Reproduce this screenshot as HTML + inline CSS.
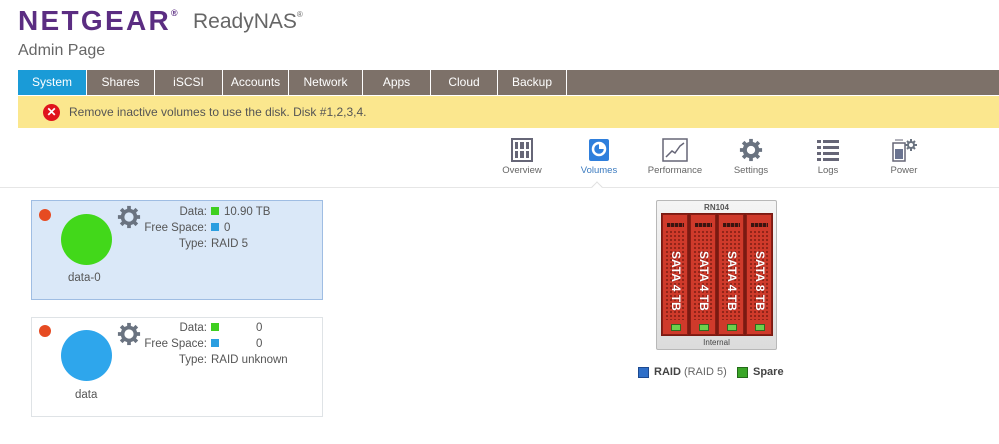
<!DOCTYPE html>
<html><head><style>
*{margin:0;padding:0;box-sizing:border-box}
body{width:999px;height:444px;overflow:hidden;background:#fff;font-family:"Liberation Sans",sans-serif;position:relative;color:#444}
.a{position:absolute}
.tab{position:absolute;top:70px;height:25px;background:#7d7169;color:#fff;font-size:12px;text-align:center;line-height:25px;border-right:1px solid #fff}
.nav{position:absolute;top:138px;width:70px;text-align:center;font-size:9.5px;color:#666}
.nav svg{display:block;margin:0 auto 3px}
.card{position:absolute;left:31px;width:292px;height:100px}
.lbl{position:absolute;font-size:11.5px;color:#555;text-align:right;width:100px}
.val{position:absolute;font-size:11.5px;color:#555}
.sq{display:inline-block;width:8px;height:8px;vertical-align:-0px;margin-right:5px}
.drive{position:absolute;top:214px;width:26px;height:121px;background:#cf3a2b;border:1px solid #8a1e15}
.drive .t{position:absolute;left:4px;top:8px;width:17px;height:4px;background:repeating-linear-gradient(90deg,#3a1410 0 3px,#a02a1e 3px 4px)}
.drive .h{position:absolute;left:2px;right:2px;top:15px;bottom:14px;background:radial-gradient(circle,#8e2318 1px,transparent 1.3px) 0 0/4px 4px}
.drive .s{position:absolute;left:13px;top:36px;transform:rotate(90deg);transform-origin:0 0;color:#fff;font-weight:bold;font-size:12px;white-space:nowrap;margin-left:7px;text-shadow:0 0 1px #600}
.drive .l{position:absolute;left:8px;bottom:3px;width:10px;height:7px;background:#6cd04c;border:1px solid #2e6b1f}
</style></head><body>
<div class="a" style="left:18px;top:5px;font-size:28px;font-weight:900;color:#5b2d82;letter-spacing:2.3px">NETGEAR<sup style="font-size:9px;vertical-align:14px">®</sup></div>
<div class="a" style="left:193px;top:10px;font-size:21px;color:#666">ReadyNAS<sup style="font-size:8px;vertical-align:11px">®</sup></div>
<div class="a" style="left:18px;top:42px;font-size:16px;color:#666">Admin Page</div>
<div class="a" style="left:18px;top:70px;width:981px;height:25px;background:#7d7169"></div>
<div class="tab" style="left:18px;width:69px;background:#1a9bd7">System</div>
<div class="tab" style="left:87px;width:68px">Shares</div>
<div class="tab" style="left:155px;width:68px">iSCSI</div>
<div class="tab" style="left:223px;width:66px">Accounts</div>
<div class="tab" style="left:289px;width:74px">Network</div>
<div class="tab" style="left:363px;width:68px">Apps</div>
<div class="tab" style="left:431px;width:67px">Cloud</div>
<div class="tab" style="left:498px;width:69px">Backup</div>
<div class="a" style="left:18px;top:96px;width:981px;height:32px;background:#fbe78e"></div>
<div class="a" style="left:43px;top:104px;width:17px;height:17px;border-radius:50%;background:#e0141c;color:#fff;font-size:12px;font-weight:bold;text-align:center;line-height:17px">✕</div>
<div class="a" style="left:69px;top:105px;font-size:12px;color:#555">Remove inactive volumes to use the disk. Disk #1,2,3,4.</div>

<div class="nav" style="left:487px"><svg width="22" height="24"><rect x="1" y="1" width="20" height="22" fill="#fff" stroke="#667" stroke-width="2"/><g fill="#667"><rect x="4" y="4" width="3" height="7"/><rect x="9" y="4" width="4" height="7"/><rect x="15" y="4" width="3" height="7"/><rect x="4" y="13" width="3" height="7"/><rect x="9" y="13" width="4" height="7"/><rect x="15" y="13" width="3" height="7"/></g></svg>Overview</div>
<div class="nav" style="left:564px;color:#3a7abf"><svg width="22" height="24"><rect x="1" y="1" width="20" height="22" rx="2" fill="#2f7fdc"/><circle cx="11" cy="11" r="6" fill="none" stroke="#fff" stroke-width="2.5"/><path d="M11 11 L17 11 A6 6 0 0 0 11 5 Z" fill="#fff"/></svg>Volumes</div>
<div class="nav" style="left:640px"><svg width="26" height="24"><rect x="1" y="1" width="24" height="22" fill="#fff" stroke="#667" stroke-width="1.5"/><path d="M4 19 L10 13 L13 15 L18 8 L22 5" fill="none" stroke="#667" stroke-width="1.5"/></svg>Performance</div>
<div class="nav" style="left:716px"><svg width="24" height="24" viewBox="0 0 26 26"><g fill="#6a7380"><circle cx="13" cy="13" r="9"/><g stroke="#6a7380" stroke-width="4"><line x1="13" y1="1" x2="13" y2="25"/><line x1="1" y1="13" x2="25" y2="13"/><line x1="4.5" y1="4.5" x2="21.5" y2="21.5"/><line x1="21.5" y1="4.5" x2="4.5" y2="21.5"/></g></g><circle cx="13" cy="13" r="4.5" fill="#fff"/></svg>Settings</div>
<div class="nav" style="left:793px"><svg width="24" height="24"><g fill="#667"><rect x="1" y="2" width="4" height="3"/><rect x="7" y="2" width="16" height="3"/><rect x="1" y="8" width="4" height="3"/><rect x="7" y="8" width="16" height="3"/><rect x="1" y="14" width="4" height="3"/><rect x="7" y="14" width="16" height="3"/><rect x="1" y="20" width="4" height="3"/><rect x="7" y="20" width="16" height="3"/></g></svg>Logs</div>
<div class="nav" style="left:869px"><svg width="28" height="24"><rect x="3" y="5" width="12" height="18" fill="#fff" stroke="#667" stroke-width="1.5"/><rect x="5" y="11" width="8" height="10" fill="#6a7390"/><line x1="5" y1="2" x2="13" y2="2" stroke="#667"/><g fill="#6a7380"><circle cx="21" cy="7" r="4"/><g stroke="#6a7380" stroke-width="2"><line x1="21" y1="1" x2="21" y2="13"/><line x1="15" y1="7" x2="27" y2="7"/><line x1="17" y1="3" x2="25" y2="11"/><line x1="25" y1="3" x2="17" y2="11"/></g></g><circle cx="21" cy="7" r="2" fill="#fff"/></svg>Power</div>
<div class="a" style="left:0;top:187px;width:999px;height:1px;background:#e6e6e6"></div>
<div class="a" style="left:593px;top:183px;width:8px;height:8px;background:#fff;border-left:1px solid #e0e0e0;border-top:1px solid #e0e0e0;transform:rotate(45deg)"></div>

<div class="card" style="top:200px;background:#dae8f8;border:1px solid #9fbde3"></div>
<div class="a" style="left:39px;top:209px;width:12px;height:12px;border-radius:50%;background:#e64b22"></div>
<div class="a" style="left:61px;top:214px;width:51px;height:51px;border-radius:50%;background:#42d81a"></div>
<div class="a" style="left:68px;top:272px;font-size:11.5px;color:#555">data-0</div>
<svg class="a" style="left:117px;top:205px" width="24" height="24" viewBox="0 0 26 26"><g fill="#6a7380"><circle cx="13" cy="13" r="9"/><g stroke="#6a7380" stroke-width="4"><line x1="13" y1="1" x2="13" y2="25"/><line x1="1" y1="13" x2="25" y2="13"/><line x1="4.5" y1="4.5" x2="21.5" y2="21.5"/><line x1="21.5" y1="4.5" x2="4.5" y2="21.5"/></g></g><circle cx="13" cy="13" r="5" fill="#dae8f8"/></svg>
<div class="lbl" style="left:107px;top:206px">Data:</div>
<div class="lbl" style="left:107px;top:222px">Free Space:</div>
<div class="lbl" style="left:107px;top:238px">Type:</div>
<div class="val" style="left:211px;top:206px"><span class="sq" style="background:#3fcf20"></span>10.90 TB</div>
<div class="val" style="left:211px;top:222px"><span class="sq" style="background:#2b9ee0"></span>0</div>
<div class="val" style="left:211px;top:238px">RAID 5</div>

<div class="card" style="top:317px;background:#fff;border:1px solid #dfe3e6"></div>
<div class="a" style="left:39px;top:325px;width:12px;height:12px;border-radius:50%;background:#e64b22"></div>
<div class="a" style="left:61px;top:330px;width:51px;height:51px;border-radius:50%;background:#2ea6ec"></div>
<div class="a" style="left:75px;top:389px;font-size:11.5px;color:#555">data</div>
<svg class="a" style="left:117px;top:322px" width="24" height="24" viewBox="0 0 26 26"><g fill="#6a7380"><circle cx="13" cy="13" r="9"/><g stroke="#6a7380" stroke-width="4"><line x1="13" y1="1" x2="13" y2="25"/><line x1="1" y1="13" x2="25" y2="13"/><line x1="4.5" y1="4.5" x2="21.5" y2="21.5"/><line x1="21.5" y1="4.5" x2="4.5" y2="21.5"/></g></g><circle cx="13" cy="13" r="5" fill="#fff"/></svg>
<div class="lbl" style="left:107px;top:322px">Data:</div>
<div class="lbl" style="left:107px;top:338px">Free Space:</div>
<div class="lbl" style="left:107px;top:354px">Type:</div>
<div class="val" style="left:211px;top:322px"><span class="sq" style="background:#3fcf20"></span></div>
<div class="val" style="left:256px;top:322px">0</div>
<div class="val" style="left:211px;top:338px"><span class="sq" style="background:#2b9ee0"></span></div>
<div class="val" style="left:256px;top:338px">0</div>
<div class="val" style="left:211px;top:354px">RAID unknown</div>

<div class="a" style="left:656px;top:200px;width:121px;height:150px;background:linear-gradient(#f4f4f4,#dcdcdc);border:1px solid #b8b8b8;border-radius:2px"></div>
<div class="a" style="left:656px;top:203px;width:121px;text-align:center;font-size:8px;font-weight:bold;color:#555">RN104</div>
<div class="a" style="left:661px;top:213px;width:112px;height:123px;background:#7a1a12"></div>
<div class="drive" style="left:662px"><div class="t"></div><div class="h"></div><div class="s">SATA 4 TB</div><div class="l"></div></div>
<div class="drive" style="left:690px"><div class="t"></div><div class="h"></div><div class="s">SATA 4 TB</div><div class="l"></div></div>
<div class="drive" style="left:718px"><div class="t"></div><div class="h"></div><div class="s">SATA 4 TB</div><div class="l"></div></div>
<div class="drive" style="left:746px"><div class="t"></div><div class="h"></div><div class="s">SATA 8 TB</div><div class="l"></div></div>
<div class="a" style="left:656px;top:338px;width:121px;text-align:center;font-size:8px;color:#444">Internal</div>

<div class="a" style="left:638px;top:367px;width:11px;height:11px;background:#2f6fc8;border:1px solid #1d4a90"></div>
<div class="a" style="left:654px;top:366px;font-size:11px;color:#444"><b>RAID</b> <span style="color:#666">(RAID 5)</span></div>
<div class="a" style="left:737px;top:367px;width:11px;height:11px;background:#3aa627;border:1px solid #236b18"></div>
<div class="a" style="left:753px;top:366px;font-size:11px;color:#444;font-weight:bold">Spare</div>
</body></html>
